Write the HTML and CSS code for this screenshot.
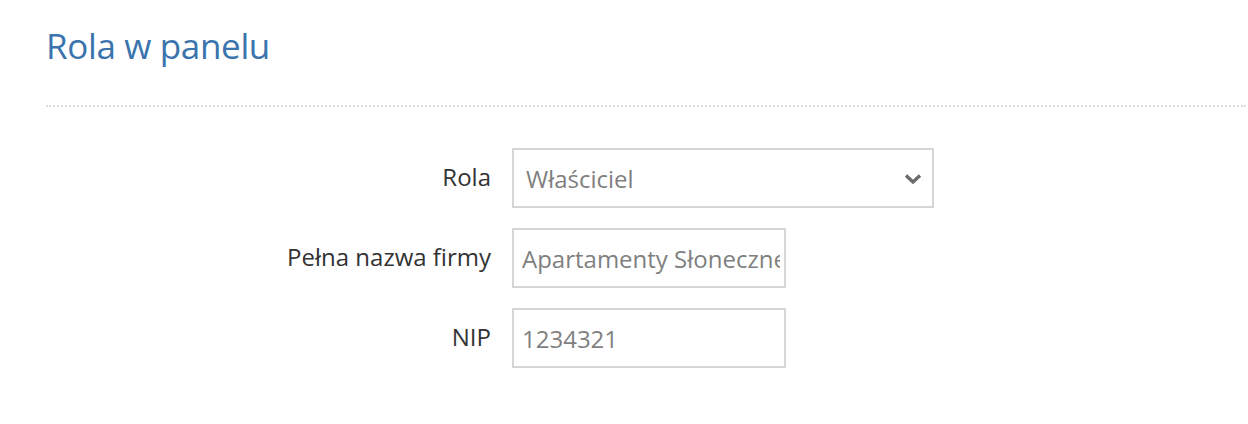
FILE: index.html
```html
<!DOCTYPE html>
<html lang="pl">
<head>
<meta charset="utf-8">
<title>Rola w panelu</title>
<link rel="stylesheet" href="styles.css">
</head>
<body>
<div class="page">
  <h2 class="title">Rola w panelu</h2>
  <div class="form">
    <label class="label" for="rola">Rola</label>
    <div class="select field-wide">
      <span class="value">Właściciel</span>
      <svg class="chevron" width="18" height="12" viewBox="0 0 18 12"><path d="M2 2.5 L9 9 L16 2.5" fill="none" stroke="#6b6b6b" stroke-width="3.4" stroke-linecap="butt" stroke-linejoin="miter"/></svg>
    </div>
    <label class="label" for="firma">Pełna nazwa firmy</label>
    <div class="input field-narrow"><span class="value">Apartamenty Słoneczne</span></div>
    <label class="label" for="nip">NIP</label>
    <div class="input field-narrow"><span class="value">1234321</span></div>
  </div>
</div>
</body>
</html>
```
FILE: styles.css
```css
html, body {
  margin: 0;
  padding: 0;
  background: #ffffff;
}
body {
  font-family: "Open Sans", "Liberation Sans", sans-serif;
}
.page {
  padding: 22px 2px 0 46px;
}
.title {
  margin: 0;
  font-size: 35px;
  font-weight: 400;
  line-height: 48px;
  color: #3a74ad;
  letter-spacing: -0.35px;
}
.form {
  margin-top: 35px;
  border-top: 2px dotted #dddddd;
  padding-top: 41px;
  display: grid;
  grid-template-columns: 445px auto;
  column-gap: 21px;
  row-gap: 20px;
  align-items: center;
}
.label {
  text-align: right;
  font-size: 24px;
  color: #333333;
  margin-top: -3px;
}
.select, .input {
  box-sizing: border-box;
  height: 60px;
  border: 2px solid #d6d6d6;
  display: flex;
  align-items: center;
  padding: 0 10px 0 12px;
  white-space: nowrap;
  font-size: 24px;
  color: #7f7f7f;
}
.input {
  padding: 0 4px 0 8px;
}
.value {
  overflow: hidden;
  min-width: 0;
}
.field-wide {
  width: 422px;
  justify-content: space-between;
}
.field-narrow {
  width: 274px;
}
.chevron {
  flex: none;
  margin-top: 2px;
}
```
